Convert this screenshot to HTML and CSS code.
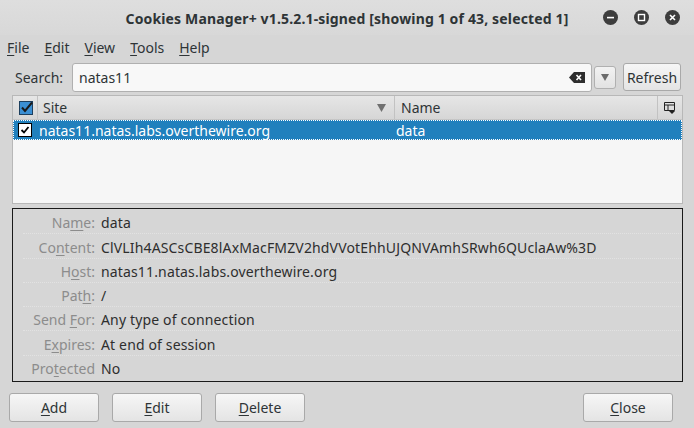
FILE: index.html
```html
<!DOCTYPE html>
<html>
<head>
<meta charset="utf-8">
<link rel="stylesheet" href="styles.css">
</head>
<body>
<div class="window">
  <div class="titlebar">
    <div></div>
    <div class="title">Cookies Manager+ v1.5.2.1-signed [showing 1 of 43, selected 1]</div>
    <div class="controls">
      <span class="ctl"><svg width="15" height="15" viewBox="0 0 15 15"><circle cx="7.5" cy="7.5" r="7.5" fill="#3d3d3d"/><rect x="4" y="6.8" width="7" height="1.6" fill="#fff"/></svg></span>
      <span class="ctl"><svg width="15" height="15" viewBox="0 0 15 15"><circle cx="7.5" cy="7.5" r="7.5" fill="#3d3d3d"/><rect x="4.5" y="4.5" width="6" height="6" fill="none" stroke="#fff" stroke-width="1.4"/></svg></span>
      <span class="ctl"><svg width="15" height="15" viewBox="0 0 15 15"><circle cx="7.5" cy="7.5" r="7.5" fill="#3d3d3d"/><path d="M5 5 L10 10 M10 5 L5 10" stroke="#fff" stroke-width="1.6"/></svg></span>
    </div>
  </div>
  <div class="menubar">
    <span class="menu"><u>F</u>ile</span>
    <span class="menu"><u>E</u>dit</span>
    <span class="menu"><u>V</u>iew</span>
    <span class="menu"><u>T</u>ools</span>
    <span class="menu"><u>H</u>elp</span>
  </div>
  <div class="searchrow">
    <span class="searchlabel">Search:</span>
    <div class="input">
      <span class="inputtext">natas11</span>
      <svg class="clear" width="16" height="11" viewBox="0 0 16 11"><path d="M0 5.5 L5 0 H16 V11 H5 Z" fill="#2e2e2e"/><path d="M7.5 3 L12 8 M12 3 L7.5 8" stroke="#fff" stroke-width="1.6"/></svg>
    </div>
    <div class="dropbtn"><svg width="8" height="7" viewBox="0 0 8 7"><path d="M0 0 H8 L4 7 Z" fill="#6a6a6a"/></svg></div>
    <div class="btn refresh">Refresh</div>
  </div>
  <div class="tree">
    <div class="thead">
      <div class="hcheck">
        <svg width="15" height="14" viewBox="0 0 15 14"><rect x="0.5" y="0.5" width="13" height="13" fill="#3b8fd3" stroke="#1d3f5e"/><path d="M3 6.5 L6 10 L13 1.5" fill="none" stroke="#1a1a1a" stroke-width="2"/></svg>
      </div>
      <div class="hcol site"><span>Site</span><svg class="sort" width="9" height="8" viewBox="0 0 9 8"><path d="M0 0 H9 L4.5 8 Z" fill="#707070"/></svg></div>
      <div class="hcol name"><span>Name</span></div>
      <div class="hpick">
        <svg width="11" height="12" viewBox="0 0 11 12"><path d="M0.5 0.5 H10.5 V8.5 H0.5 Z M0.5 3 H10.5 M4 3 V8.5" fill="none" stroke="#222"/><path d="M5 9 H11 L8 12 Z" fill="#222"/></svg>
      </div>
    </div>
    <div class="trow selected">
      <div class="rcheck">
        <svg width="14" height="14" viewBox="0 0 14 14"><rect x="0.5" y="0.5" width="13" height="13" fill="#fff" stroke="#000"/><path d="M3.5 7 L6 9.5 L10.5 4" fill="none" stroke="#000" stroke-width="1.8"/></svg>
      </div>
      <div class="rsite">natas11.natas.labs.overthewire.org</div>
      <div class="rname">data</div>
    </div>
  </div>
  <div class="details">
    <div class="drow"><span class="dlabel">Na<u>m</u>e:</span><span class="dval">data</span></div>
    <div class="drow tall"><span class="dlabel">Co<u>n</u>tent:</span><span class="dval">ClVLIh4ASCsCBE8lAxMacFMZV2hdVVotEhhUJQNVAmhSRwh6QUclaAw%3D</span></div>
    <div class="drow"><span class="dlabel">H<u>o</u>st:</span><span class="dval">natas11.natas.labs.overthewire.org</span></div>
    <div class="drow"><span class="dlabel">Pat<u>h</u>:</span><span class="dval">/</span></div>
    <div class="drow"><span class="dlabel">Send <u>F</u>or:</span><span class="dval">Any type of connection</span></div>
    <div class="drow tall"><span class="dlabel">E<u>x</u>pires:</span><span class="dval">At end of session</span></div>
    <div class="drow last"><span class="dlabel">Pro<u>t</u>ected</span><span class="dval">No</span></div>
  </div>
  <div class="buttons">
    <div class="btn big"><u>A</u>dd</div>
    <div class="btn big"><u>E</u>dit</div>
    <div class="btn big"><u>D</u>elete</div>
    <div class="spacer"></div>
    <div class="btn big"><u>C</u>lose</div>
  </div>
</div>
</body>
</html>
```

FILE: styles.css
```css
* { box-sizing: border-box; }
html, body {
  margin: 0;
  padding: 0;
  background: #d6d6d6;
}
body {
  font-family: "Noto Sans", "DejaVu Sans", sans-serif;
  font-size: 13px;
  color: #2e3436;
}
.window {
  width: 694px;
  height: 428px;
  display: flex;
  flex-direction: column;
  background: #d6d6d6;
}
u { text-decoration: underline; text-underline-offset: 2px; }

.titlebar {
  height: 35px;
  display: grid;
  grid-template-columns: 1fr auto 1fr;
  align-items: center;
  background: linear-gradient(#dedede, #d8d8d8);
}
.title {
  font-weight: bold;
  font-size: 14px;
  letter-spacing: 0.15px;
  color: #2e3436;
  padding-top: 1px;
}
.controls {
  display: flex;
  justify-content: flex-end;
  gap: 16px;
  padding-right: 14px;
}
.ctl { display: block; width: 15px; height: 15px; }
.ctl svg { display: block; }

.menubar {
  height: 25px;
  display: flex;
  align-items: center;
  gap: 15px;
  padding-left: 7px;
  font-size: 14px;
  color: #2e3436;
}

.searchrow {
  display: flex;
  align-items: center;
  height: 30px;
  margin-top: 2px;
}
.searchlabel {
  width: 72px;
  padding-left: 15px;
  font-size: 14px;
}
.input {
  width: 520px;
  height: 29px;
  border: 1px solid #b0b0b0;
  border-radius: 3px;
  background: #f8f8f8;
  display: flex;
  align-items: center;
  padding: 0 6px 0 6px;
}
.inputtext { flex: 1; font-size: 14px; color: #2e3436; }
.clear { display: block; }
.dropbtn {
  width: 22px;
  height: 23px;
  margin-left: 2px;
  border: 1px solid #b0b0b0;
  border-radius: 3px;
  background: linear-gradient(#f2f2f2, #e2e2e2);
  display: flex;
  align-items: center;
  justify-content: center;
}
.btn {
  border: 1px solid #a9a9a9;
  border-radius: 3px;
  background: linear-gradient(#f6f6f6, #e4e4e4);
  display: flex;
  align-items: center;
  justify-content: center;
  color: #2e3436;
  font-size: 14px;
}
.refresh {
  width: 58px;
  height: 28px;
  margin-left: 7px;
}

.tree {
  margin: 3px 11px 0 12px;
  height: 109px;
  border: 1px solid #b8b8b8;
  background: #f6f6f6;
}
.thead {
  height: 24px;
  display: flex;
  background: linear-gradient(#e6e6e6, #d6d6d6);
  border-bottom: 1px solid #c6c6c6;
}
.hcheck {
  width: 25px;
  border-right: 1px solid #c2c2c2;
  display: flex;
  align-items: center;
  padding-left: 6px;
}
.hcheck svg { display: block; }
.hcol {
  display: flex;
  align-items: center;
  font-size: 14px;
  color: #2e3436;
  border-right: 1px solid #c2c2c2;
}
.site {
  width: 357px;
  padding-left: 5px;
  padding-right: 8px;
  justify-content: space-between;
}
.name {
  width: 263px;
  padding-left: 6px;
}
.sort { display: block; }
.hpick {
  flex: 1;
  display: flex;
  align-items: center;
  justify-content: center;
  padding-right: 2px;
}
.hpick svg { display: block; }

.trow {
  height: 20px;
  display: flex;
  align-items: center;
}
.selected {
  background: #2080bd;
  color: #ffffff;
  outline: 1px dotted #ffffff;
  outline-offset: -1px;
}
.rcheck {
  width: 26px;
  padding-left: 5px;
}
.rcheck svg { display: block; }
.rsite {
  width: 357px;
  font-size: 14px;
}
.rname { font-size: 14px; }

.details {
  margin: 4px 11px 0 12px;
  height: 174px;
  border: 1px solid #1a1a1a;
  background: #d6d6d6;
  padding: 1px 1px 0 10px;
}
.drow {
  height: 24px;
  padding-top: 4px;
  line-height: 18px;
  display: flex;
  border-bottom: 1px dotted #e2e2e2;
}
.drow.tall { height: 25px; padding-top: 5px; }
.drow.last { border-bottom: none; }
.dlabel {
  width: 72px;
  text-align: right;
  color: #8c8c8c;
  font-size: 14px;
  white-space: nowrap;
}
.dval {
  margin-left: 6px;
  color: #2e2e2e;
  font-size: 14px;
  letter-spacing: 0.15px;
  white-space: nowrap;
}

.buttons {
  display: flex;
  margin-top: 11px;
  padding: 0 21px 0 9px;
  gap: 13px;
}
.big {
  width: 90px;
  height: 29px;
}
.spacer { flex: 1; }
```
